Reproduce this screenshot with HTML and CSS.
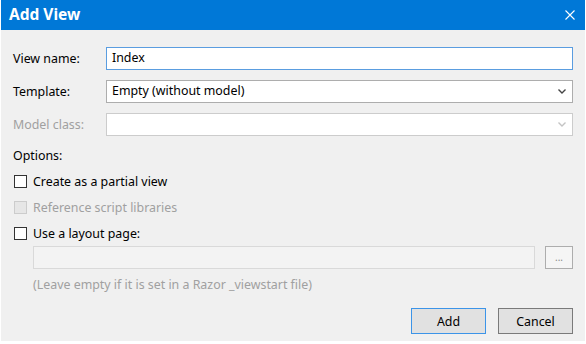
FILE: index.html
```html
<!DOCTYPE html>
<html>
<head>
<meta charset="utf-8">
<link rel="stylesheet" href="styles.css">
</head>
<body>
<div class="dialog">
  <div class="titlebar">
    <span class="title">Add View</span>
    <svg class="close" width="10" height="10" viewBox="0 0 10 10"><path d="M0.5 0.5 L9.5 9.5 M9.5 0.5 L0.5 9.5" stroke="#fff" stroke-width="1.1" fill="none"/></svg>
  </div>
  <div class="content">
    <div class="form">
      <label class="lbl">View name:</label>
      <div class="field focus">Index</div>
      <label class="lbl">Template:</label>
      <div class="field select">Empty (without model)
        <svg class="chev" width="8" height="5" viewBox="0 0 8 5"><path d="M0.5 0.5 L4 4 L7.5 0.5" stroke="#444" stroke-width="1.4" fill="none"/></svg>
      </div>
      <label class="lbl disabled">Model class:</label>
      <div class="field select dis">
        <svg class="chev" width="8" height="5" viewBox="0 0 8 5"><path d="M0.5 0.5 L4 4 L7.5 0.5" stroke="#c4c4c4" stroke-width="1.4" fill="none"/></svg>
      </div>
    </div>
    <div class="options">Options:</div>
    <div class="check"><span class="box"></span><span>Create as a partial view</span></div>
    <div class="check disabled"><span class="box dbox"></span><span>Reference script libraries</span></div>
    <div class="check"><span class="box"></span><span>Use a layout page:</span></div>
    <div class="layout-row">
      <div class="field layout"></div>
      <div class="browse">...</div>
    </div>
    <div class="hint">(Leave empty if it is set in a Razor _viewstart file)</div>
    <div class="buttons">
      <div class="btn primary">Add</div>
      <div class="btn">Cancel</div>
    </div>
  </div>
</div>
</body>
</html>
```

FILE: styles.css
```css
html, body {
  margin: 0;
  padding: 0;
  background: #ffffff;
}
body {
  width: 586px;
  height: 344px;
  font-family: "Noto Sans", "Open Sans", sans-serif;
  font-size: 12.4px;
  color: #000;
}
.dialog {
  margin: 0 1px;
  width: 584px;
  height: 341px;
  background: #f0f0f0;
  display: flex;
  flex-direction: column;
}
.titlebar {
  height: 30px;
  background: #0078d7;
  display: flex;
  align-items: center;
  justify-content: space-between;
  padding: 0 10px 0 8px;
  flex: none;
}
.title {
  color: #fff;
  font-weight: bold;
  font-size: 15.5px;
  position: relative;
  top: -1px;
}
.close {
  display: block;
}
.content {
  flex: 1;
  display: flex;
  flex-direction: column;
  padding: 17px 12px 7px 12px;
}
.form {
  display: grid;
  grid-template-columns: 93px 1fr;
  row-gap: 10px;
  align-items: center;
}
.disabled {
  color: #a0a0a0;
}
.field {
  height: 23px;
  box-sizing: border-box;
  border: 1px solid #adadad;
  background: #fff;
  padding: 0 5px;
  display: flex;
  align-items: center;
  line-height: 1;
}
.field.focus {
  border-color: #5a9de0;
}
.select {
  position: relative;
}
.field.dis {
  border-color: #cccccc;
}
.chev {
  position: absolute;
  right: 6px;
  top: 8px;
}
.options {
  margin-top: 11px;
  height: 18px;
  line-height: 18px;
}
.check {
  display: flex;
  align-items: center;
  gap: 6px;
  height: 18px;
  margin-top: 8px;
}
.options + .check {
  margin-top: 7px;
}
.box {
  width: 13px;
  height: 13px;
  box-sizing: border-box;
  border: 1px solid #333;
  background: #fff;
  margin-left: 1px;
}
.box.dbox {
  border-color: #cccccc;
  background: #e6e6e6;
}
.layout-row {
  display: flex;
  gap: 10px;
  margin-top: 4px;
  padding-left: 20px;
}
.field.layout {
  flex: 1;
  background: #f3f3f3;
  border-color: #d9d9d9;
}
.browse {
  width: 28px;
  height: 23px;
  box-sizing: border-box;
  border: 1px solid #adadad;
  background: #f5f5f5;
  color: #8a8a8a;
  font-size: 10px;
  display: flex;
  align-items: center;
  justify-content: center;
  padding-bottom: 2px;
}
.hint {
  color: #a0a0a0;
  padding-left: 20px;
  margin-top: 7px;
}
.buttons {
  margin-top: auto;
  display: flex;
  justify-content: flex-end;
  gap: 12px;
}
.btn {
  width: 75px;
  height: 26px;
  box-sizing: border-box;
  border: 1px solid #7a7a7a;
  background: #e1e1e1;
  display: flex;
  align-items: center;
  justify-content: center;
}
.btn.primary {
  border-color: #3c94e8;
}
```
